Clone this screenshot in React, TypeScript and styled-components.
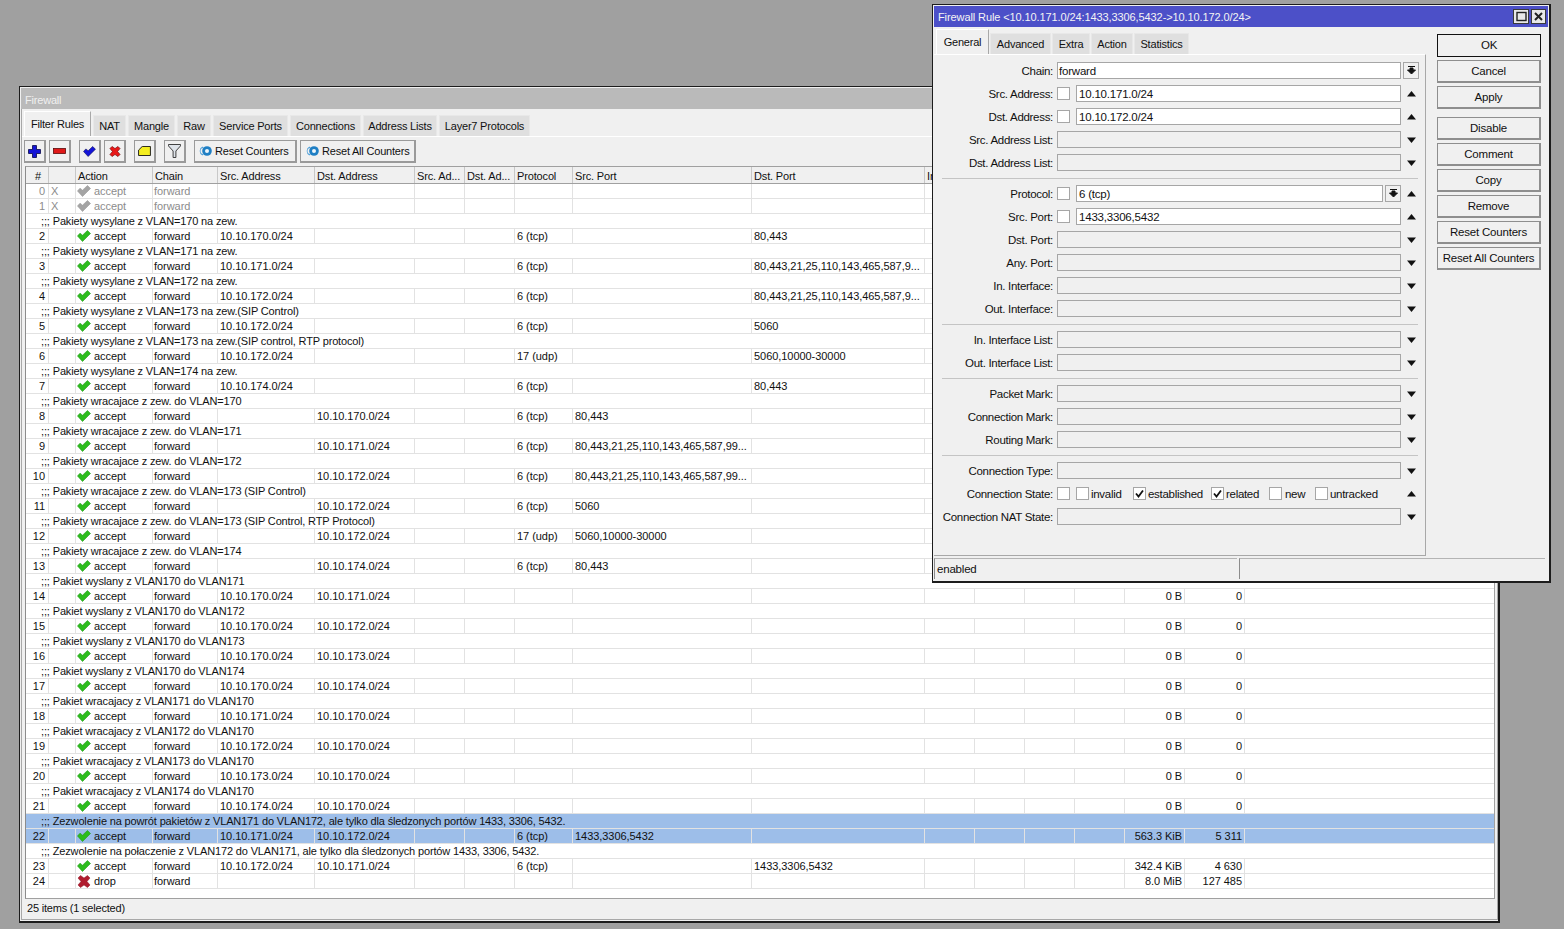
import React from "react";
import styled, { createGlobalStyle } from "styled-components";

const GlobalStyle = createGlobalStyle`
    html, body {
        margin: 0;
        height: 100%;
        overflow: hidden;
        background: #a0a0a0;
        color: #111;
        font-family: "Liberation Sans", Arial, sans-serif;
        font-size: 11px;
        letter-spacing: -0.2px;
    }
`;

const Desktop = styled.div`
    position: relative;
    width: 1564px;
    height: 929px;
    overflow: hidden;
`;

const Window = styled.div`
    position: absolute;
    left: 19px;
    top: 86px;
    width: 1481px;
    height: 837px;
    box-sizing: border-box;
    display: flex;
    flex-direction: column;
    background: #f0f0f0;
    border: 1px solid #1c1c1c;
    border-bottom-width: 2px;
    border-right-width: 2px;
    padding: 1px 0 1px 1px;
`;

const TitleBar = styled.div`
    height: 21px;
    flex: none;
    background: #bababa;
    color: #f0f0f0;
    line-height: 25px;
    padding-left: 4px;
`;

const Frame = styled.div`
    flex: 1;
    min-height: 0;
    display: flex;
    flex-direction: column;
    border: 1px solid #a8a8a8;
    border-top: none;
`;

const TabStrip = styled.div`
    height: 27px;
    flex: none;
    display: flex;
    align-items: flex-end;
    gap: 2px;
    padding-left: 2px;
    background: #f0f0f0;
    border-bottom: 1px solid #fff;
`;

const Tab = styled.div<{ $w: number; $active?: boolean }>`
    width: ${(p) => p.$w}px;
    height: ${(p) => (p.$active ? 25 : 21)}px;
    box-sizing: border-box;
    text-align: center;
    line-height: ${(p) => (p.$active ? 24 : 21)}px;
    background: ${(p) => (p.$active ? "#f0f0f0" : "#dfdfdf")};
    border: 1px solid ${(p) => (p.$active ? "#fff" : "#e8e8e8")};
    border-bottom: none;
    border-right-color: ${(p) => (p.$active ? "#a8a8a8" : "#e8e8e8")};
`;

const Toolbar = styled.div`
    height: 29px;
    flex: none;
    display: flex;
    align-items: center;
    padding-left: 2px;
`;

const ToolButton = styled.div<{ $after?: number }>`
    width: 22px;
    height: 23px;
    flex: none;
    box-sizing: border-box;
    margin-right: ${(p) => p.$after ?? 3}px;
    display: flex;
    align-items: center;
    justify-content: center;
    border: 1px solid #9a9a9a;
    border-right-width: 2px;
    border-bottom-width: 2px;
    background: #f0f0f0;
`;

const TextToolButton = styled(ToolButton)<{ $w: number; $inset: number }>`
    width: ${(p) => p.$w}px;
    justify-content: flex-start;
    gap: 3px;
    padding-left: ${(p) => p.$inset}px;
`;

const TableBox = styled.div`
    flex: 1;
    margin: 0 2px 0 3px;
    min-height: 0;
    background: #fff;
    border: 1px solid #a0a0a0;
    border-left-color: #8c8c8c;
    overflow: hidden;
`;

const HeaderRow = styled.div`
    display: flex;
    height: 16px;
    background: #f0f0f0;
    border-bottom: 1px solid #a0a0a0;
`;

const HeaderCell = styled.div<{ $w: number; $center?: boolean }>`
    width: ${(p) => p.$w}px;
    flex: none;
    box-sizing: border-box;
    padding-left: 2px;
    line-height: 18px;
    letter-spacing: -0.15px;
    white-space: nowrap;
    overflow: hidden;
    text-align: ${(p) => (p.$center ? "center" : "left")};
    border-right: 1px solid #c8c8c8;
`;

const Row = styled.div<{ $selected?: boolean; $muted?: boolean }>`
    display: flex;
    height: 15px;
    box-sizing: border-box;
    line-height: 14px;
    white-space: nowrap;
    background: ${(p) => (p.$selected ? "#9dbee9" : "#fff")};
    color: ${(p) => (p.$muted ? "#8c8c8c" : "#111")};
    border-bottom: 1px solid #e2e2e2;
`;

const Cell = styled.div<{ $w: number; $right?: boolean; $pad?: number }>`
    width: ${(p) => p.$w}px;
    flex: none;
    box-sizing: border-box;
    overflow: hidden;
    display: flex;
    align-items: center;
    gap: 3px;
    letter-spacing: -0.05px;
    justify-content: ${(p) => (p.$right ? "flex-end" : "flex-start")};
    padding: ${(p) => (p.$right ? `0 ${p.$pad ?? 2}px 0 0` : `0 0 0 ${p.$pad ?? 2}px`)};
    border-right: 1px solid #e2e2e2;
`;

const CommentRow = styled(Row)`
    padding-left: 15px;
    letter-spacing: -0.15px;
    line-height: 14px;
`;

const Dots = styled.span`
    margin-right: 3px;
`;

const StatusBar = styled.div`
    height: 20px;
    flex: none;
    line-height: 19px;
    padding-left: 5px;
`;

const Dialog = styled.div`
    position: absolute;
    left: 932px;
    top: 4px;
    width: 619px;
    height: 579px;
    box-sizing: border-box;
    display: flex;
    flex-direction: column;
    background: #f0f0f0;
    border: 1px solid #1c1c1c;
    border-bottom-width: 2px;
    border-right-width: 2px;
    padding: 1px;
`;

const DialogTitle = styled.div`
    height: 21px;
    flex: none;
    display: flex;
    align-items: center;
    justify-content: space-between;
    background: #4c50c8;
    color: #f4f4f4;
    letter-spacing: -0.1px;
    padding: 0 2px 0 4px;
`;

const TitleButtons = styled.div`
    display: flex;
    gap: 2px;
`;

const TitleButton = styled.div<{ $w: number }>`
    width: ${(p) => p.$w}px;
    height: 15px;
    box-sizing: border-box;
    display: flex;
    align-items: center;
    justify-content: center;
    background: #e8e8e8;
    border: 1px solid #3a3a3a;
`;

const DialogBody = styled.div`
    flex: 1;
    min-height: 0;
    display: flex;
`;

const FormColumn = styled.div`
    width: 492px;
    flex: none;
    display: flex;
    flex-direction: column;
`;

const DialogTabs = styled(TabStrip)`
    height: 27px;
    padding-left: 2px;
    border-bottom: none;
    gap: 1px;
`;

const FormPanel = styled.div`
    height: 503px;
    box-sizing: border-box;
    padding-top: 4px;
    border-top: 1px solid #fff;
    border-right: 1px solid #a8a8a8;
    border-bottom: 1px solid #a8a8a8;
`;

const FormRow = styled.div`
    height: 23px;
    display: flex;
    align-items: center;
`;

const Label = styled.div`
    width: 123px;
    flex: none;
    padding-right: 4px;
    box-sizing: border-box;
    text-align: right;
    white-space: nowrap;
    font-size: 11.5px;
    letter-spacing: -0.3px;
`;

const Field = styled.div`
    width: 344px;
    flex: none;
    display: flex;
    align-items: center;
`;

const Input = styled.div<{ $filled?: boolean; $tight?: boolean }>`
    flex: 1;
    height: 17px;
    box-sizing: border-box;
    padding-left: ${(p) => (p.$tight ? 1 : 2)}px;
    line-height: 16px;
    font-size: 11.5px;
    background: ${(p) => (p.$filled ? "#fff" : "#f0f0f0")};
    border: 1px solid #a6a6a6;
`;

const Box = styled.div<{ $after?: number }>`
    width: 13px;
    height: 13px;
    flex: none;
    box-sizing: border-box;
    margin-right: ${(p) => p.$after ?? 6}px;
    display: flex;
    align-items: center;
    justify-content: center;
    background: #fff;
    border: 1px solid #a6a6a6;
`;

const StateOption = styled.div<{ $w: number }>`
    width: ${(p) => p.$w}px;
    flex: none;
    display: flex;
    align-items: center;
    font-size: 11.5px;
    letter-spacing: -0.3px;
    white-space: nowrap;
`;

const DropButton = styled.div`
    width: 16px;
    height: 17px;
    flex: none;
    box-sizing: border-box;
    margin-left: 2px;
    display: flex;
    align-items: center;
    justify-content: center;
    background: #f0f0f0;
    border: 1px solid #a6a6a6;
`;

const ArrowSlot = styled.div`
    width: 21px;
    flex: none;
    display: flex;
    justify-content: center;
`;

const Separator = styled.div`
    height: 1px;
    margin: 4px 8px 3px;
    width: 476px;
    background: #c4c4c4;
`;

const SideButtons = styled.div`
    width: 104px;
    margin: 7px 0 0 11px;
    display: flex;
    flex-direction: column;
    gap: 3px;
`;

const SideButton = styled.div<{ $primary?: boolean; $gap?: boolean }>`
    height: 23px;
    box-sizing: border-box;
    margin-top: ${(p) => (p.$gap ? 5 : 0)}px;
    text-align: center;
    line-height: 20px;
    font-size: 11.5px;
    background: #f0f0f0;
    border: 1px solid ${(p) => (p.$primary ? "#111" : "#8e8e8e")};
    border-right-width: ${(p) => (p.$primary ? 1 : 2)}px;
    border-bottom-width: ${(p) => (p.$primary ? 1 : 2)}px;
`;

const DialogStatus = styled.div`
    height: 23px;
    flex: none;
    margin-top: 1px;
    display: flex;
    gap: 2px;
    padding-right: 3px;
`;

const StatusCell = styled.div<{ $w?: number }>`
    ${(p) => (p.$w ? `width: ${p.$w}px;` : "flex: 1;")}
    box-sizing: border-box;
    margin-top: 1px;
    height: 21px;
    padding-left: 2px;
    line-height: 21px;
    font-size: 11.5px;
    border-top: 1px solid #b4b4b4;
    border-left: 1px solid #8c8c8c;
`;

const CHECK_PATH = "M0.5 6 L3 3.2 L5.5 5.2 L10.5 0.5 L13.5 3.5 L5.5 11.5 Z";
const CROSS_PATH =
    "M3 0.5 L6.5 3 L10 0.5 L12.5 3 L9.5 6.5 L12.5 10 L10 12.5 L6.5 10 L3 12.5 L0.5 10 L3.5 6.5 L0.5 3 Z";

const CheckIcon = ({ color, edge }: { color: string; edge: string }) => (
    <svg width="14" height="12" viewBox="0 0 14 12">
        <path d={CHECK_PATH} fill={color} stroke={edge} strokeWidth="0.6" />
    </svg>
);

const DropIcon = () => (
    <svg width="14" height="13" viewBox="0 0 13 13">
        <path d={CROSS_PATH} fill="#b01c2e" stroke="#8c1424" strokeWidth="0.5" />
    </svg>
);

const ResetIcon = () => (
    <svg width="13" height="10" viewBox="0 0 13 10">
        <path d="M3.5 0.5 A5 5 0 0 0 3.5 9.5 L4.5 8 A3 3 0 0 1 4.5 2 Z" fill="#4f9fd8" />
        <circle cx="8" cy="5" r="4.8" fill="#1f7fc4" />
        <circle cx="8" cy="5" r="2" fill="#eef6fb" />
    </svg>
);

const ArrowUp = () => (
    <svg width="9" height="6" viewBox="0 0 9 6">
        <path d="M4.5 0 L9 5.5 H0 Z" fill="#111" />
    </svg>
);

const ArrowDown = () => (
    <svg width="9" height="6" viewBox="0 0 9 6">
        <path d="M0 0.5 H9 L4.5 6 Z" fill="#111" />
    </svg>
);

const DropArrow = () => (
    <svg width="9" height="9" viewBox="0 0 9 9">
        <path d="M1 0.5 H8 M3 2 H6 V4 H8.5 L4.5 8 L0.5 4 H3 Z" stroke="#111" strokeWidth="1" fill="#111" />
    </svg>
);

const Tick = () => (
    <svg width="9" height="9" viewBox="0 0 9 9">
        <path d="M1 4.5 L3.5 7.5 L8 1.5" stroke="#111" strokeWidth="1.8" fill="none" />
    </svg>
);

const widths = [23, 27, 77, 65, 97, 100, 50, 50, 58, 179, 173, 50, 50, 50, 50, 60, 60];
const headers = [
    "#",
    "",
    "Action",
    "Chain",
    "Src. Address",
    "Dst. Address",
    "Src. Ad...",
    "Dst. Ad...",
    "Protocol",
    "Src. Port",
    "Dst. Port",
    "In",
    "",
    "",
    "",
    "",
    "",
];

interface Rule {
    id: number;
    comment?: string;
    action?: string;
    off?: boolean;
    src?: string;
    dst?: string;
    proto?: string;
    sport?: string;
    dport?: string;
    bytes?: string;
    packets?: string;
    selected?: boolean;
}

const LONG_DST = "80,443,21,25,110,143,465,587,9...";
const LONG_SRC = "80,443,21,25,110,143,465,587,99...";
const TCP = "6 (tcp)";
const UDP = "17 (udp)";
const net = (n: number) => `10.10.${n}.0/24`;

const rules: Rule[] = [
    { id: 0, off: true },
    { id: 1, off: true },
    { id: 2, comment: "Pakiety wysylane z VLAN=170 na zew.", src: net(170), proto: TCP, dport: "80,443" },
    { id: 3, comment: "Pakiety wysylane z VLAN=171 na zew.", src: net(171), proto: TCP, dport: LONG_DST },
    { id: 4, comment: "Pakiety wysylane z VLAN=172 na zew.", src: net(172), proto: TCP, dport: LONG_DST },
    { id: 5, comment: "Pakiety wysylane z VLAN=173 na zew.(SIP Control)", src: net(172), proto: TCP, dport: "5060" },
    { id: 6, comment: "Pakiety wysylane z VLAN=173 na zew.(SIP control, RTP protocol)", src: net(172), proto: UDP, dport: "5060,10000-30000" },
    { id: 7, comment: "Pakiety wysylane z VLAN=174 na zew.", src: net(174), proto: TCP, dport: "80,443" },
    { id: 8, comment: "Pakiety wracajace z zew. do VLAN=170", dst: net(170), proto: TCP, sport: "80,443" },
    { id: 9, comment: "Pakiety wracajace z zew. do VLAN=171", dst: net(171), proto: TCP, sport: LONG_SRC },
    { id: 10, comment: "Pakiety wracajace z zew. do VLAN=172", dst: net(172), proto: TCP, sport: LONG_SRC },
    { id: 11, comment: "Pakiety wracajace z zew. do VLAN=173 (SIP Control)", dst: net(172), proto: TCP, sport: "5060" },
    { id: 12, comment: "Pakiety wracajace z zew. do VLAN=173 (SIP Control, RTP Protocol)", dst: net(172), proto: UDP, sport: "5060,10000-30000" },
    { id: 13, comment: "Pakiety wracajace z zew. do VLAN=174", dst: net(174), proto: TCP, sport: "80,443" },
    { id: 14, comment: "Pakiet wyslany z VLAN170 do VLAN171", src: net(170), dst: net(171), bytes: "0 B", packets: "0" },
    { id: 15, comment: "Pakiet wyslany z VLAN170 do VLAN172", src: net(170), dst: net(172), bytes: "0 B", packets: "0" },
    { id: 16, comment: "Pakiet wyslany z VLAN170 do VLAN173", src: net(170), dst: net(173), bytes: "0 B", packets: "0" },
    { id: 17, comment: "Pakiet wyslany z VLAN170 do VLAN174", src: net(170), dst: net(174), bytes: "0 B", packets: "0" },
    { id: 18, comment: "Pakiet wracajacy z VLAN171 do VLAN170", src: net(171), dst: net(170), bytes: "0 B", packets: "0" },
    { id: 19, comment: "Pakiet wracajacy z VLAN172 do VLAN170", src: net(172), dst: net(170), bytes: "0 B", packets: "0" },
    { id: 20, comment: "Pakiet wracajacy z VLAN173 do VLAN170", src: net(173), dst: net(170), bytes: "0 B", packets: "0" },
    { id: 21, comment: "Pakiet wracajacy z VLAN174 do VLAN170", src: net(174), dst: net(170), bytes: "0 B", packets: "0" },
    {
        id: 22,
        comment: "Zezwolenie na powrót pakietów z VLAN171 do VLAN172, ale tylko dla śledzonych portów 1433, 3306, 5432.",
        src: net(171),
        dst: net(172),
        proto: TCP,
        sport: "1433,3306,5432",
        bytes: "563.3 KiB",
        packets: "5 311",
        selected: true,
    },
    {
        id: 23,
        comment: "Zezwolenie na połaczenie z VLAN172 do VLAN171, ale tylko dla śledzonych portów 1433, 3306, 5432.",
        src: net(172),
        dst: net(171),
        proto: TCP,
        dport: "1433,3306,5432",
        bytes: "342.4 KiB",
        packets: "4 630",
    },
    { id: 24, action: "drop", bytes: "8.0 MiB", packets: "127 485" },
];

const RuleRows = ({ rule }: { rule: Rule }) => {
    const action = rule.action ?? "accept";
    return (
        <>
            {rule.comment && (
                <CommentRow $selected={rule.selected}>
                    <Dots>;;;</Dots>
                    {rule.comment}
                </CommentRow>
            )}
            <Row $selected={rule.selected} $muted={rule.off}>
                <Cell $w={widths[0]} $right $pad={3}>
                    {rule.id}
                </Cell>
                <Cell $w={widths[1]}>{rule.off ? "X" : ""}</Cell>
                <Cell $w={widths[2]} $pad={1}>
                    {action === "drop" ? (
                        <DropIcon />
                    ) : rule.off ? (
                        <CheckIcon color="#a4a4a4" edge="#989898" />
                    ) : (
                        <CheckIcon color="#2cbc1c" edge="#1f9a14" />
                    )}
                    {action}
                </Cell>
                <Cell $w={widths[3]} $pad={1}>
                    forward
                </Cell>
                <Cell $w={widths[4]}>{rule.src}</Cell>
                <Cell $w={widths[5]}>{rule.dst}</Cell>
                <Cell $w={widths[6]} />
                <Cell $w={widths[7]} />
                <Cell $w={widths[8]}>{rule.proto}</Cell>
                <Cell $w={widths[9]}>{rule.sport}</Cell>
                <Cell $w={widths[10]}>{rule.dport}</Cell>
                <Cell $w={widths[11]} />
                <Cell $w={widths[12]} />
                <Cell $w={widths[13]} />
                <Cell $w={widths[14]} />
                <Cell $w={widths[15]} $right>
                    {rule.bytes}
                </Cell>
                <Cell $w={widths[16]} $right>
                    {rule.packets}
                </Cell>
            </Row>
        </>
    );
};

type Arrow = "up" | "down";

const Fields = ({
    label,
    value,
    check,
    arrow,
}: {
    label: string;
    value?: string;
    check?: boolean;
    arrow?: Arrow;
}) => (
    <FormRow>
        <Label>{label}</Label>
        <Field>
            {check && <Box />}
            <Input $filled={value !== undefined}>{value}</Input>
        </Field>
        <ArrowSlot>{arrow === "up" ? <ArrowUp /> : <ArrowDown />}</ArrowSlot>
    </FormRow>
);

const App = () => {
    return (
        <Desktop>
            <GlobalStyle />
            <Window>
                <TitleBar>Firewall</TitleBar>
                <Frame>
                    <TabStrip>
                        <Tab $w={67} $active>
                            Filter Rules
                        </Tab>
                        <Tab $w={33}>NAT</Tab>
                        <Tab $w={47}>Mangle</Tab>
                        <Tab $w={34}>Raw</Tab>
                        <Tab $w={75}>Service Ports</Tab>
                        <Tab $w={71}>Connections</Tab>
                        <Tab $w={74}>Address Lists</Tab>
                        <Tab $w={91}>Layer7 Protocols</Tab>
                    </TabStrip>
                    <Toolbar>
                        <ToolButton>
                            <svg width="13" height="13" viewBox="0 0 13 13">
                                <path d="M4.5 0.5 H8.5 V4.5 H12.5 V8.5 H8.5 V12.5 H4.5 V8.5 H0.5 V4.5 H4.5 Z" fill="#1414d8" stroke="#08084a" strokeWidth="0.8" />
                            </svg>
                        </ToolButton>
                        <ToolButton $after={8}>
                            <svg width="13" height="6" viewBox="0 0 13 6">
                                <rect x="0.5" y="0.5" width="12" height="5" fill="#e01818" stroke="#5a0a0a" strokeWidth="0.8" />
                            </svg>
                        </ToolButton>
                        <ToolButton>
                            <svg width="13" height="11" viewBox="0 0 14 12">
                                <path d={CHECK_PATH} fill="#1414d8" stroke="#08084a" strokeWidth="0.6" />
                            </svg>
                        </ToolButton>
                        <ToolButton $after={8}>
                            <svg width="12" height="11" viewBox="0 0 13 13">
                                <path d={CROSS_PATH} fill="#e81818" stroke="#600" strokeWidth="0.7" />
                            </svg>
                        </ToolButton>
                        <ToolButton $after={8}>
                            <svg width="13" height="10" viewBox="0 0 14 11">
                                <path d="M0.5 4.5 L4.5 0.5 H13.5 V10.5 H0.5 Z" fill="#f4ee20" stroke="#111" />
                            </svg>
                        </ToolButton>
                        <ToolButton $after={8}>
                            <svg width="13" height="14" viewBox="0 0 14 15">
                                <path d="M0.5 0.5 H13.5 V2 L8.5 7.5 V14.5 H5.5 V7.5 L0.5 2 Z" fill="#dfe4ea" stroke="#333" />
                            </svg>
                        </ToolButton>
                        <TextToolButton $w={103} $inset={4}>
                            <ResetIcon />
                            Reset Counters
                        </TextToolButton>
                        <TextToolButton $w={116} $inset={5}>
                            <ResetIcon />
                            Reset All Counters
                        </TextToolButton>
                    </Toolbar>
                    <TableBox>
                        <HeaderRow>
                            {headers.map((h, i) => (
                                <HeaderCell key={i} $w={widths[i]} $center={i === 0}>
                                    {h}
                                </HeaderCell>
                            ))}
                        </HeaderRow>
                        {rules.map((r) => (
                            <RuleRows key={r.id} rule={r} />
                        ))}
                    </TableBox>
                    <StatusBar>25 items (1 selected)</StatusBar>
                </Frame>
            </Window>

            <Dialog>
                <DialogTitle>
                    Firewall Rule &lt;10.10.171.0/24:1433,3306,5432-&gt;10.10.172.0/24&gt;
                    <TitleButtons>
                        <TitleButton $w={16}>
                            <svg width="11" height="11" viewBox="0 0 11 11">
                                <rect x="1" y="1.5" width="9" height="8" fill="none" stroke="#222" strokeWidth="1.4" />
                            </svg>
                        </TitleButton>
                        <TitleButton $w={15}>
                            <svg width="9" height="9" viewBox="0 0 9 9">
                                <path d="M1 1 L8 8 M8 1 L1 8" stroke="#222" strokeWidth="2" />
                            </svg>
                        </TitleButton>
                    </TitleButtons>
                </DialogTitle>
                <DialogBody>
                    <FormColumn>
                        <DialogTabs>
                            <Tab $w={53} $active>
                                General
                            </Tab>
                            <Tab $w={61}>Advanced</Tab>
                            <Tab $w={38}>Extra</Tab>
                            <Tab $w={42}>Action</Tab>
                            <Tab $w={55}>Statistics</Tab>
                        </DialogTabs>
                        <FormPanel>
                            <FormRow>
                                <Label>Chain:</Label>
                                <Field>
                                    <Input $filled $tight>
                                        forward
                                    </Input>
                                </Field>
                                <DropButton>
                                    <DropArrow />
                                </DropButton>
                            </FormRow>
                            <Fields label="Src. Address:" value="10.10.171.0/24" check arrow="up" />
                            <Fields label="Dst. Address:" value="10.10.172.0/24" check arrow="up" />
                            <Fields label="Src. Address List:" arrow="down" />
                            <Fields label="Dst. Address List:" arrow="down" />
                            <Separator />
                            <FormRow>
                                <Label>Protocol:</Label>
                                <Field>
                                    <Box />
                                    <Input $filled>6 (tcp)</Input>
                                    <DropButton>
                                        <DropArrow />
                                    </DropButton>
                                </Field>
                                <ArrowSlot>
                                    <ArrowUp />
                                </ArrowSlot>
                            </FormRow>
                            <Fields label="Src. Port:" value="1433,3306,5432" check arrow="up" />
                            <Fields label="Dst. Port:" arrow="down" />
                            <Fields label="Any. Port:" arrow="down" />
                            <Fields label="In. Interface:" arrow="down" />
                            <Fields label="Out. Interface:" arrow="down" />
                            <Separator />
                            <Fields label="In. Interface List:" arrow="down" />
                            <Fields label="Out. Interface List:" arrow="down" />
                            <Separator />
                            <Fields label="Packet Mark:" arrow="down" />
                            <Fields label="Connection Mark:" arrow="down" />
                            <Fields label="Routing Mark:" arrow="down" />
                            <Separator />
                            <Fields label="Connection Type:" arrow="down" />
                            <FormRow>
                                <Label>Connection State:</Label>
                                <Field>
                                    <StateOption $w={19}>
                                        <Box />
                                    </StateOption>
                                    <StateOption $w={57}>
                                        <Box $after={2} />
                                        invalid
                                    </StateOption>
                                    <StateOption $w={78}>
                                        <Box $after={2}>
                                            <Tick />
                                        </Box>
                                        established
                                    </StateOption>
                                    <StateOption $w={58}>
                                        <Box $after={2}>
                                            <Tick />
                                        </Box>
                                        related
                                    </StateOption>
                                    <StateOption $w={46}>
                                        <Box $after={3} />
                                        new
                                    </StateOption>
                                    <StateOption $w={86}>
                                        <Box $after={2} />
                                        untracked
                                    </StateOption>
                                </Field>
                                <ArrowSlot>
                                    <ArrowUp />
                                </ArrowSlot>
                            </FormRow>
                            <Fields label="Connection NAT State:" arrow="down" />
                        </FormPanel>
                    </FormColumn>
                    <SideButtons>
                        <SideButton $primary>OK</SideButton>
                        <SideButton>Cancel</SideButton>
                        <SideButton>Apply</SideButton>
                        <SideButton $gap>Disable</SideButton>
                        <SideButton>Comment</SideButton>
                        <SideButton>Copy</SideButton>
                        <SideButton>Remove</SideButton>
                        <SideButton>Reset Counters</SideButton>
                        <SideButton>Reset All Counters</SideButton>
                    </SideButtons>
                </DialogBody>
                <DialogStatus>
                    <StatusCell $w={303}>enabled</StatusCell>
                    <StatusCell />
                </DialogStatus>
            </Dialog>
        </Desktop>
    );
};

export default App;
